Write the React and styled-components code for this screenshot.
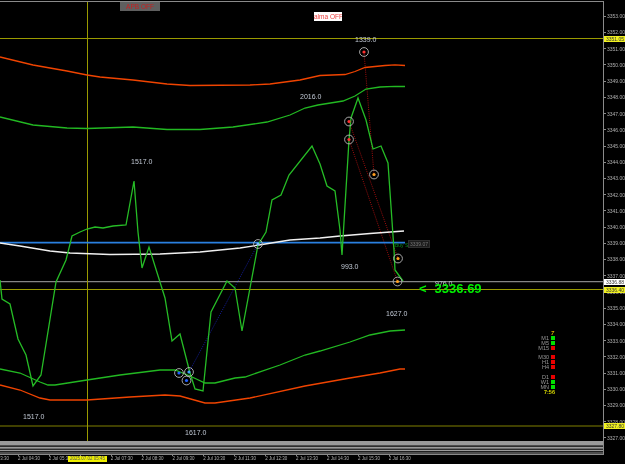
import React from "react";
import styled, { createGlobalStyle } from "styled-components";

const Global = createGlobalStyle`
  html, body { margin: 0; padding: 0; background: #000; }
  #root { width: 625px; height: 464px; overflow: hidden; }
`;

const Terminal = styled.div`
  width: 625px;
  height: 464px;
  background: #000;
  display: grid;
  grid-template-columns: 604px 21px;
  grid-template-rows: 455px 9px;
  font-family: "Liberation Sans", Arial, sans-serif;
  overflow: hidden;
  filter: blur(0.3px);
`;

const Plot = styled.div`
  position: relative;
  margin-top: 1px;
  border-top: 1px solid #8a8a8a;
  border-right: 1px solid #8a8a8a;
  border-bottom: 1px solid #8a8a8a;
  overflow: hidden;
`;

const ChartSvg = styled.svg`
  display: block;
  position: absolute;
  left: 0;
  top: -2px;
`;

const PriceAxis = styled.div`
  position: relative;
  display: flex;
  flex-direction: column;
  padding-top: 8.2px;
  box-sizing: border-box;
`;

const PriceTick = styled.div`
  height: 16.23px;
  line-height: 16.23px;
  display: flex;
  align-items: center;
  gap: 1px;
  font-size: 5px;
  color: #b0b0b0;
  white-space: nowrap;
  &::before {
    content: "";
    width: 2px;
    height: 1px;
    background: #8a8a8a;
  }
`;

const PriceTag = styled.div`
  position: absolute;
  left: 0;
  top: ${(p) => p.$y}px;
  width: 21px;
  height: 6px;
  line-height: 6px;
  background: ${(p) => p.$bg};
  color: #333;
  font-size: 5px;
  text-align: right;
  padding-right: 1px;
  box-sizing: border-box;
`;

const TimeAxis = styled.div`
  grid-column: 1 / 3;
  position: relative;
  display: flex;
  margin-left: -13px;
`;

const TimeTick = styled.div`
  flex: 0 0 30.92px;
  position: relative;
  font-size: 4.5px;
  line-height: 8px;
  color: #b4b4b4;
  white-space: nowrap;
  &::before {
    content: "";
    position: absolute;
    left: 0;
    top: -1px;
    width: 1px;
    height: 2px;
    background: #8a8a8a;
  }
`;

const CursorTime = styled.div`
  position: absolute;
  left: 81px;
  top: 1px;
  width: 39px;
  height: 6px;
  line-height: 6px;
  text-align: center;
  background: #f0f000;
  color: #555;
  font-size: 4.5px;
`;

const ValueLabel = styled.span`
  position: absolute;
  left: ${(p) => p.$x}px;
  top: ${(p) => p.$y}px;
  font-size: 7px;
  line-height: 8px;
  color: #c0c8d4;
  white-space: nowrap;
`;

const ToggleButton = styled.div`
  position: absolute;
  left: ${(p) => p.$x}px;
  top: ${(p) => p.$y}px;
  width: ${(p) => p.$w}px;
  height: 9px;
  line-height: 9px;
  text-align: center;
  font-size: 6.5px;
  white-space: nowrap;
  overflow: hidden;
  background: ${(p) => p.$bg};
  color: ${(p) => p.$fg};
`;

const LivePrice = styled.div`
  position: absolute;
  left: 419px;
  top: 279px;
  display: flex;
  gap: 8px;
  font-size: 13px;
  line-height: 15px;
  font-weight: 700;
  color: #00f000;
`;

const LineTag = styled.span`
  position: absolute;
  left: 408px;
  top: 238px;
  height: 6px;
  line-height: 6px;
  padding: 0 1px;
  font-size: 5px;
  color: #777;
  background: #1c1c1c;
  border: 1px solid #2e2e2e;
`;

const LineName = styled.span`
  position: absolute;
  left: 395px;
  top: 240px;
  font-size: 5px;
  line-height: 6px;
  color: #0b8a1c;
`;

const SignalPanel = styled.div`
  position: absolute;
  left: 530px;
  top: 329px;
  width: 25px;
  display: flex;
  flex-direction: column;
  align-items: flex-end;
  font-size: 5.5px;
  color: #9a9a9a;
`;

const SignalGroup = styled.div`
  display: flex;
  flex-direction: column;
  margin-bottom: ${(p) => p.$gap}px;
`;

const SignalRow = styled.div`
  display: flex;
  justify-content: flex-end;
  align-items: center;
  gap: 2px;
  height: 5px;
  line-height: 5px;
`;

const SignalLamp = styled.i`
  display: block;
  width: 4px;
  height: 5px;
  background: ${(p) => (p.$on ? "#00e000" : "#e80000")};
  border-bottom: 1px solid #000;
  box-sizing: border-box;
`;

const SignalHead = styled.div`
  color: #d8b000;
  font-size: 5.5px;
  font-weight: 700;
  font-style: italic;
  height: 5px;
  line-height: 5px;
  padding-right: 1px;
`;

const SignalClock = styled.div`
  color: #d8d800;
  font-size: 5.5px;
  font-weight: 700;
  height: 5px;
  line-height: 5px;
`;

const path = (pts) => pts.map((p, i) => `${i ? "L" : "M"}${p[0]} ${p[1]}`).join(" ");

const redUpper = [[0,57],[33,65],[67,71],[87,75],[100,77],[133,80],[167,84],[190,85.5],[250,85],[270,84],[300,80],[320,75.5],[345,74.5],[355,71.5],[365,67.5],[385,65.5],[395,64.8],[405,65.5]];
const greenUpper = [[0,117],[33,125],[67,128],[87,128.5],[133,127],[167,129.5],[200,129.5],[233,127],[267,122],[290,115],[305,108],[318,105],[343,101],[355,96],[366,89],[380,87],[395,86.3],[405,86.5]];
const price = [[0,280],[2,299],[10,304],[18,339],[26,355],[33,386],[41,375],[56,282],[66,260],[72,236],[80,232],[87,229],[95,227],[103,228],[113,226],[126,225],[134,181],[138,232],[142,268],[149,247],[165,298],[172,341],[180,334],[190,373],[195,389],[203,391],[211,312],[227,281],[235,288],[242,331],[258,245],[266,232],[272,200],[281,195],[289,175],[312,146],[320,164],[327,186],[335,191],[340,230],[342,255],[349,140],[351,118],[358,98],[366,120],[373,149],[381,146],[388,163],[394,250],[395,270],[403,281]];
const greenLower = [[0,369],[20,373],[40,382],[48,385],[55,385],[87,380],[120,375],[160,370],[175,370],[190,376],[205,383],[215,383],[235,378],[245,377],[280,365],[305,355],[320,351],[350,342],[370,335],[390,331],[405,330]];
const redLower = [[0,385],[20,390],[40,398],[50,400],[87,400],[130,397],[165,395],[180,396],[205,403],[215,403],[250,398],[305,386],[350,378],[380,373],[400,369],[405,369]];
const white = [[0,243],[20,246],[50,251],[70,253],[110,254.5],[160,254],[200,252],[240,248],[259,245],[290,240],[320,238],[340,236],[370,233.5],[404,231]];

const trades = [
  { x: 364, y: 52, c: "#ff3030" },
  { x: 349, y: 121.5, c: "#ff3030" },
  { x: 349, y: 139.5, c: "#ff3030" },
  { x: 374, y: 174.5, c: "#ffa020" },
  { x: 398, y: 258.5, c: "#ffa020" },
  { x: 397.5, y: 281.5, c: "#ffa020" },
  { x: 179, y: 373, c: "#2060ff" },
  { x: 189, y: 372, c: "#40a0ff" },
  { x: 186.5, y: 380.5, c: "#2060ff" },
  { x: 258, y: 244, c: "#80c0ff" },
];

const bands = [[441, 4.5], [446.7, 2], [449.7, 1.5], [452.5, 1]];
const prices = ["3353.00","3352.00","3351.00","3350.00","3349.00","3348.00","3347.00","3346.00","3345.00","3344.00","3343.00","3342.00","3341.00","3340.00","3339.00","3338.00","3337.00","3336.00","3335.00","3334.00","3333.00","3332.00","3331.00","3330.00","3329.00","3328.00","3327.00"];
const times = ["2 Jul 03:30","2 Jul 04:30","2 Jul 05:30","2 Jul 06:30","2 Jul 07:30","2 Jul 08:30","2 Jul 09:30","2 Jul 10:30","2 Jul 11:30","2 Jul 12:30","2 Jul 13:30","2 Jul 14:30","2 Jul 15:30","2 Jul 16:30"];
const labels = [
  ["1339.0", 355, 36], ["2016.0", 300, 93], ["1517.0", 131, 158], ["993.0", 341, 263],
  ["1627.0", 386, 310], ["1517.0", 23, 413], ["1617.0", 185, 429], ["976.0", 435, 280],
];
const signals = [
  [[["M1", 1], ["M5", 1], ["M15", 0]], 4],
  [[["M30", 0], ["H1", 0], ["H4", 0]], 5],
  [[["D1", 0], ["W1", 1], ["MN", 1]], 0],
];

export default function App() {
  return (
    <Terminal>
      <Global />
      <Plot>
        <ChartSvg width="603" height="455" viewBox="0 0 603 455">
          <line x1="0" x2="603" y1="38.5" y2="38.5" stroke="#9a9a00" />
          <line x1="0" x2="603" y1="289.5" y2="289.5" stroke="#9a9a00" />
          <line x1="0" x2="603" y1="426" y2="426" stroke="#808000" />
          <line x1="0" x2="603" y1="281.7" y2="281.7" stroke="#858585" strokeWidth="1.2" />
          <line x1="87.5" x2="87.5" y1="0" y2="441" stroke="#9a9a00" />
          {bands.map(([y, h]) => (
            <rect key={y} x="0" y={y} width="603" height={h} fill="#9a9a9a" />
          ))}
          <path d="M364 52L374 174.5M349 121.5L398 258.5M349 139.5L397.5 281.5" stroke="#b01010" strokeWidth="0.9" strokeDasharray="1 1.2" fill="none" />
          <path d="M189 372L258 244" stroke="#1520a8" strokeWidth="0.9" strokeDasharray="1 1.2" fill="none" />
          <line x1="0" x2="405" y1="242.7" y2="242.7" stroke="#2a80e0" strokeWidth="1.8" />
          <path d={path(white)} stroke="#f0f0f0" strokeWidth="1.3" fill="none" />
          <path d={path(redUpper)} stroke="#f04400" strokeWidth="1.3" fill="none" />
          <path d={path(redLower)} stroke="#f04400" strokeWidth="1.3" fill="none" />
          <path d={path(greenUpper)} stroke="#22b822" strokeWidth="1.3" fill="none" />
          <path d={path(greenLower)} stroke="#22b822" strokeWidth="1.3" fill="none" />
          <path d={path(price)} stroke="#26bc26" strokeWidth="1.3" fill="none" />
          {trades.map((t) => (
            <g key={`${t.x}-${t.y}`}>
              <circle cx={t.x} cy={t.y} r="4.4" fill="none" stroke="#b8b8b8" strokeWidth="0.9" />
              <circle cx={t.x} cy={t.y} r="1.6" fill={t.c} />
            </g>
          ))}
        </ChartSvg>
        <ToggleButton $x={120} $y={0} $w={40} $bg="#5f5f5f" $fg="#c82020">APB OFF</ToggleButton>
        <ToggleButton $x={314} $y={10} $w={28} $bg="#fff" $fg="#f04040">alma OFF</ToggleButton>
        {labels.map(([t, x, y]) => (
          <ValueLabel key={`${t}-${x}`} $x={x} $y={y - 2}>{t}</ValueLabel>
        ))}
        <LineName>Buy Stop</LineName>
        <LineTag>3339.07</LineTag>
        <LivePrice><span>&lt;</span><span>3336.69</span></LivePrice>
        <SignalPanel>
          <SignalHead>7</SignalHead>
          {signals.map(([rows, gap], i) => (
            <SignalGroup key={i} $gap={gap}>
              {rows.map(([name, on]) => (
                <SignalRow key={name}>
                  <span>{name}</span>
                  <SignalLamp $on={!!on} />
                </SignalRow>
              ))}
            </SignalGroup>
          ))}
          <SignalClock>7:56</SignalClock>
        </SignalPanel>
      </Plot>
      <PriceAxis>
        {prices.map((p) => (
          <PriceTick key={p}>{p}</PriceTick>
        ))}
        <PriceTag $y={35.5} $bg="#f0f020">3351.05</PriceTag>
        <PriceTag $y={278.7} $bg="#ffffff">3336.88</PriceTag>
        <PriceTag $y={286.5} $bg="#f0f020">3336.40</PriceTag>
        <PriceTag $y={423} $bg="#f0f020">3327.80</PriceTag>
      </PriceAxis>
      <TimeAxis>
        {times.map((t) => (
          <TimeTick key={t}>{t}</TimeTick>
        ))}
        <CursorTime>2025.07.02 05:45</CursorTime>
      </TimeAxis>
    </Terminal>
  );
}
